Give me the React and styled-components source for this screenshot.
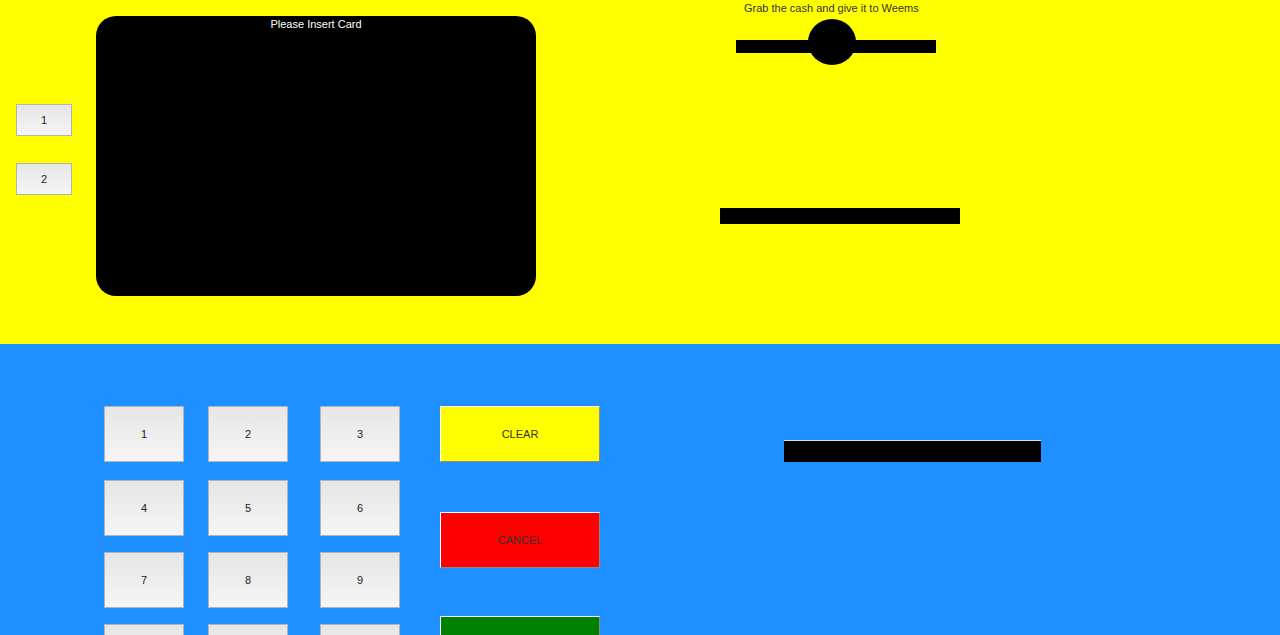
import React from "react";
import styled, { createGlobalStyle } from "styled-components";

const GlobalStyle = createGlobalStyle`
	html, body {
		margin: 0;
		padding: 0;
		overflow: hidden;
		font-family: "Liberation Sans", Arial, Helvetica, sans-serif;
	}
`;

const Page = styled.div`
	display: flex;
	flex-direction: column;
	height: 635px;
`;

const TopSection = styled.div`
	display: flex;
	height: 344px;
	flex-shrink: 0;
	padding: 0 16px;
	box-sizing: border-box;
	background-color: #ffff00;
`;

const SideButtons = styled.div`
	display: flex;
	flex-direction: column;
	gap: 27px;
	margin-top: 104px;
`;

const GreyButton = styled.button`
	display: flex;
	align-items: center;
	justify-content: center;
	width: ${(props) => props.w}px;
	height: ${(props) => props.h}px;
	padding: 0 0 1px;
	border: 1px solid #b4b4b4;
	background: linear-gradient(#e6e6e6, #f5f5f5);
	color: #222;
	font-family: "Liberation Sans", Arial, sans-serif;
	font-size: 11px;
	box-sizing: border-box;
`;

const Screen = styled.div`
	width: 440px;
	height: 280px;
	margin: 16px 0 0 24px;
	border-radius: 20px;
	background-color: #000;
	color: #fff;
	font-size: 11px;
	line-height: 16px;
	text-align: center;
`;

const RightPanel = styled.div`
	display: flex;
	flex-direction: column;
	width: 240px;
	margin-left: 184px;
`;

const Hint = styled.p`
	margin: 2px 0 0 24px;
	font-size: 11px;
	line-height: 13px;
	color: #333;
`;

const CardSlot = styled.div`
	position: relative;
	width: 200px;
	height: 46px;
	margin: 4px 0 0 16px;
`;

const SlotBar = styled.div`
	position: absolute;
	left: 0;
	top: 21px;
	width: 200px;
	height: 13px;
	background-color: #000;
`;

const SlotKnob = styled.div`
	position: absolute;
	left: 72px;
	top: 0;
	width: 48px;
	height: 46px;
	border-radius: 50%;
	background-color: #000;
`;

const CashSlot = styled.div`
	width: 240px;
	height: 16px;
	margin-top: 143px;
	background-color: #000;
`;

const BottomSection = styled.div`
	display: flex;
	align-items: flex-start;
	flex: 1;
	padding: 62px 0 0 104px;
	background-color: #1e90ff;
`;

const Keypad = styled.div`
	display: grid;
	grid-template-columns: 104px 112px 80px;
	grid-template-rows: 74px 72px 72px 72px;
`;

const Actions = styled.div`
	display: flex;
	flex-direction: column;
	gap: 50px;
	margin-left: 40px;
`;

const ActionButton = styled.button`
	width: 160px;
	height: 56px;
	padding: 0;
	border: 1px solid;
	border-color: #fff #8a8a8a #8a8a8a #fff;
	background-color: ${(props) => props.bg};
	color: #333;
	font-family: "Liberation Sans", Arial, sans-serif;
	font-size: 11px;
	box-sizing: border-box;
	& + & + & {
		margin-top: -2px;
	}
`;

const Display = styled.div`
	width: 257px;
	height: 22px;
	margin: 34px 0 0 184px;
	border-top: 1px solid #ddd;
	background-color: #000;
	box-sizing: border-box;
`;

const keys = ["1", "2", "3", "4", "5", "6", "7", "8", "9", "*", "0", "#"];

const App = () => {
	return (
		<Page>
			<GlobalStyle />
			<TopSection>
				<SideButtons>
					<GreyButton w={56} h={32}>1</GreyButton>
					<GreyButton w={56} h={32}>2</GreyButton>
				</SideButtons>
				<Screen>Please Insert Card</Screen>
				<RightPanel>
					<Hint>Grab the cash and give it to Weems</Hint>
					<CardSlot>
						<SlotBar />
						<SlotKnob />
					</CardSlot>
					<CashSlot />
				</RightPanel>
			</TopSection>
			<BottomSection>
				<Keypad>
					{keys.map((k) => (
						<GreyButton key={k} w={80} h={56}>
							{k}
						</GreyButton>
					))}
				</Keypad>
				<Actions>
					<ActionButton bg="#ffff00">CLEAR</ActionButton>
					<ActionButton bg="#ff0000">CANCEL</ActionButton>
					<ActionButton bg="#008000">ENTER</ActionButton>
				</Actions>
				<Display />
			</BottomSection>
		</Page>
	);
};

export default App;
